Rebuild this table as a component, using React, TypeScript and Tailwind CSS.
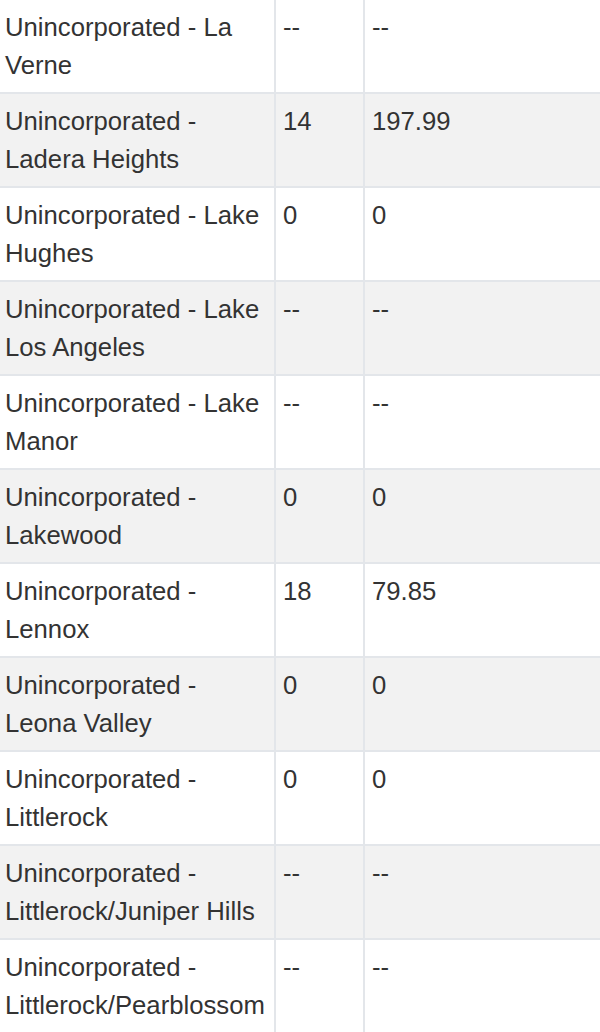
import React from "react";

const rows: [string, string, string, string][] = [
  ["Unincorporated - La", "Verne", "--", "--"],
  ["Unincorporated -", "Ladera Heights", "14", "197.99"],
  ["Unincorporated - Lake", "Hughes", "0", "0"],
  ["Unincorporated - Lake", "Los Angeles", "--", "--"],
  ["Unincorporated - Lake", "Manor", "--", "--"],
  ["Unincorporated -", "Lakewood", "0", "0"],
  ["Unincorporated -", "Lennox", "18", "79.85"],
  ["Unincorporated -", "Leona Valley", "0", "0"],
  ["Unincorporated -", "Littlerock", "0", "0"],
  ["Unincorporated -", "Littlerock/Juniper Hills", "--", "--"],
  ["Unincorporated -", "Littlerock/Pearblossom", "--", "--"],
];

export default function App() {
  return (
    <div
      className="w-[600px] h-[1032px] overflow-hidden bg-white text-[#333333] text-[25.7px] leading-[38px]"
      style={{ fontFamily: '"Liberation Sans", Arial, sans-serif' }}
    >
      {rows.map((r, i) => (
        <div
          key={i}
          className={`grid grid-cols-[276px_89px_1fr] h-[94px] border-b-2 border-[#e3e6ea] ${
            i % 2 === 1 ? "bg-[#f2f2f2]" : "bg-white"
          }`}
        >
          <div className="border-r-2 border-[#e3e6ea] pl-[5px] pt-[8px] whitespace-nowrap">
            <div>{r[0]}</div>
            <div>{r[1]}</div>
          </div>
          <div className="border-r-2 border-[#e3e6ea] pl-[7px] pt-[8px]">{r[2]}</div>
          <div className="pl-[7px] pt-[8px]">{r[3]}</div>
        </div>
      ))}
    </div>
  );
}
